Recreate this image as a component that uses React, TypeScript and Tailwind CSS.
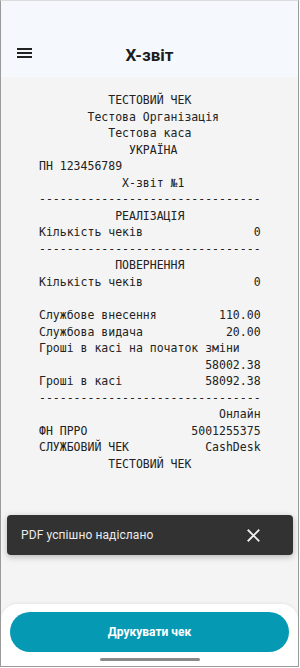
import React from "react";

const W = 32;
const center = (s: string, pad: number) => " ".repeat(pad) + s;
const row = (l: string, r: string) => l + " ".repeat(Math.max(1, W - l.length - r.length)) + r;
const right = (r: string) => " ".repeat(W - r.length) + r;
const dash = "-".repeat(W);

const lines: string[] = [
  center("ТЕСТОВИЙ ЧЕК", 10),
  center("Тестова Організація", 7),
  center("Тестова каса", 10),
  center("УКРАЇНА", 13),
  "ПН 123456789",
  center("Х-звіт №1", 12),
  dash,
  center("РЕАЛІЗАЦІЯ", 11),
  row("Кількість чеків", "0"),
  dash,
  center("ПОВЕРНЕННЯ", 11),
  row("Кількість чеків", "0"),
  " ",
  row("Службове внесення", "110.00"),
  row("Службова видача", "20.00"),
  "Гроші в касі на початок зміни",
  right("58002.38"),
  row("Гроші в касі", "58092.38"),
  dash,
  right("Онлайн"),
  row("ФН ПРРО", "5001255375"),
  row("СЛУЖБОВИЙ ЧЕК", "CashDesk"),
  center("ТЕСТОВИЙ ЧЕК", 10),
];

export default function App() {
  return (
    <div className="w-[300px] h-[668px] bg-white">
      <div
        className="relative w-[299px] h-[667px] border-l border-r border-b border-t border-l-[#9a9a9a] border-r-[#9a9a9a] border-b-[#9a9a9a] border-t-[#dcdcdc] flex flex-col overflow-hidden bg-[#f4f4f4]"
        style={{ fontFamily: "Roboto, 'Noto Sans', sans-serif" }}
      >
        {/* Header */}
        <div className="h-[76px] shrink-0 bg-[#f5f9fd] flex items-end pb-[12px] relative">
          <div className="w-full flex items-center h-[20px] relative">
            <div className="absolute left-[16px] top-[3px] flex flex-col gap-[2px]">
              <div className="w-[15px] h-[2px] bg-[#222]" />
              <div className="w-[15px] h-[2px] bg-[#222]" />
              <div className="w-[15px] h-[2px] bg-[#222]" />
            </div>
            <div className="w-full text-center text-[17px] font-bold text-[#1c1c1c] leading-[20px]">Х-звіт</div>
          </div>
        </div>

        {/* Receipt */}
        <div className="flex-1 pt-[15px] flex justify-center">
          <pre
            className="text-[11.5px] leading-[16.55px] text-[#222] whitespace-pre w-[222px] ml-[1px]"
            style={{ fontFamily: "'DejaVu Sans Mono', monospace" }}
          >
            {lines.join("\n")}
          </pre>
        </div>

        {/* Toast */}
        <div className="absolute left-[6px] right-[5px] top-[514px] h-[40px] bg-[#323232] rounded-[4px] shadow-[0_2px_6px_rgba(0,0,0,0.25)] flex items-center justify-between pl-[14px] pr-[33px]">
          <span className="text-[12px] text-[#ececec] tracking-[0.1px]">PDF успішно надіслано</span>
          <svg width="13" height="13" viewBox="0 0 14 14" fill="none" stroke="#f0f0f0" strokeWidth="2" strokeLinecap="square">
            <path d="M1.5 1.5 L12.5 12.5 M12.5 1.5 L1.5 12.5" />
          </svg>
        </div>

        {/* Bottom sheet */}
        <div className="shrink-0 bg-white rounded-t-[16px] h-[62px] pt-[8px] px-[9px] flex flex-col items-center shadow-[0_-1px_3px_rgba(0,0,0,0.06)]">
          <button className="w-full h-[40px] rounded-full bg-[#0699b4] text-white text-[12px] font-bold flex items-center justify-center">
            Друкувати чек
          </button>
          <div className="mt-[6px] w-[100px] h-[3px] rounded-full bg-[#8a8a8a]" />
        </div>
      </div>
    </div>
  );
}
